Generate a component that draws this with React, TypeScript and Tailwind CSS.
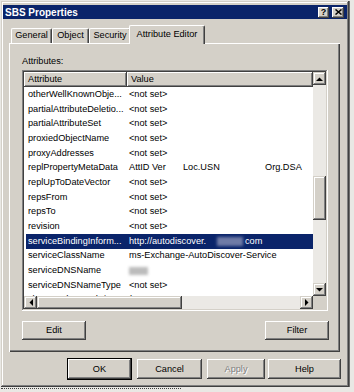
import type {ReactNode} from 'react';

type Dir = 'up' | 'down' | 'left' | 'right';

const Arrow = ({dir}: {dir: Dir}) => {
  if (dir === 'up' || dir === 'down') {
    const pts = dir === 'up' ? '0,4 7,4 3.5,0.5' : '0,0 7,0 3.5,3.5';
    return (
      <svg width="7" height="4" viewBox="0 0 7 4">
        <polygon points={pts} fill="#000" />
      </svg>
    );
  }
  const pts = dir === 'left' ? '4,0 4,7 0.5,3.5' : '0,0 0,7 3.5,3.5';
  return (
    <svg width="4" height="7" viewBox="0 0 4 7">
      <polygon points={pts} fill="#000" />
    </svg>
  );
};

const ScrollBtn = ({dir}: {dir: Dir}) => (
  <div className="flex h-[13px] w-[13px] shrink-0 items-center justify-center bg-[#d4d0c8] shadow-[inset_-1px_-1px_#404040,inset_1px_1px_#d4d0c8,inset_-2px_-2px_#808080,inset_2px_2px_#ffffff]">
    <Arrow dir={dir} />
  </div>
);

const Btn = ({children, className}: {children: ReactNode; className: string}) => (
  <div
    className={`flex items-center justify-center bg-[#d4d0c8] shadow-[inset_-1px_-1px_#404040,inset_1px_1px_#ffffff,inset_-2px_-2px_#808080,inset_2px_2px_#d4d0c8] ${className}`}
  >
    {children}
  </div>
);

const NotSet = '<not set>';

const rows: {name: string; value: ReactNode; selected?: boolean}[] = [
  {name: 'otherWellKnownObje...', value: NotSet},
  {name: 'partialAttributeDeletio...', value: NotSet},
  {name: 'partialAttributeSet', value: NotSet},
  {name: 'proxiedObjectName', value: NotSet},
  {name: 'proxyAddresses', value: NotSet},
  {
    name: 'replPropertyMetaData',
    value: (
      <span className="flex">
        <span className="w-[23px]">AttID</span>
        <span className="w-[31px]">Ver</span>
        <span className="w-[82px]">Loc.USN</span>
        <span>Org.DSA</span>
      </span>
    ),
  },
  {name: 'replUpToDateVector', value: NotSet},
  {name: 'repsFrom', value: NotSet},
  {name: 'repsTo', value: NotSet},
  {name: 'revision', value: NotSet},
  {
    name: 'serviceBindingInform...',
    selected: true,
    value: (
      <span className="flex items-center">
        <span className="w-[88px]">http://autodiscover.</span>
        <span className="h-[9px] w-[26px] bg-[#6f7ba6] blur-[1.5px]" />
        <span className="ml-[2px]">com</span>
      </span>
    ),
  },
  {name: 'serviceClassName', value: 'ms-Exchange-AutoDiscover-Service'},
  {
    name: 'serviceDNSName',
    value: <span className="mt-[1px] block h-[8px] w-[19px] bg-[#bcbcbc] blur-[1.5px]" />,
  },
  {name: 'serviceDNSNameType', value: NotSet},
  {name: 'showInAdvancedViewOnly', value: 'TRUE'},
];

const Tab = ({label, w, active}: {label: string; w: string; active?: boolean}) => (
  <div
    className={
      active
        ? `relative z-10 -mx-[2px] -mb-[1px] flex h-[19px] items-start justify-center rounded-t-[2px] border-t border-l border-r border-white border-r-[#404040] bg-[#d4d0c8] pt-[3px] shadow-[inset_-1px_0_#808080] ${w}`
        : `flex h-[15px] items-start justify-center rounded-t-[2px] border-t border-l border-r border-white border-r-[#404040] bg-[#d4d0c8] pt-[1px] shadow-[inset_-1px_0_#808080] ${w}`
    }
  >
    {label}
  </div>
);

const App = () => {
  return (
    <div className="h-[392px] w-[354px] overflow-hidden bg-[#e9e8e4] pt-[1px] pl-[1px] font-['Liberation_Sans',Arial,sans-serif] text-[9.2px] leading-[11px] text-black">
      <div className="h-[386px] w-[348px] bg-[#d4d0c8] p-[2px] shadow-[inset_-1px_-1px_#404040,inset_1px_1px_#d4d0c8,inset_-2px_-2px_#808080,inset_2px_2px_#ffffff,1px_0_#6e6e6e]">
        {/* title bar */}
        <div className="mt-[2px] flex h-[14px] items-center justify-between bg-[#0a246a] pr-[3px] pl-[2px]">
          <span className="text-[10px] font-bold text-white">SBS Properties</span>
          <div className="flex items-center gap-[3px]">
            <Btn className="h-[11px] w-[11px] text-[9px] font-bold leading-none">?</Btn>
            <Btn className="h-[11px] w-[12px]">
              <svg width="7" height="6" viewBox="0 0 7 6">
                <path d="M0.5 0.5 L6.5 5.5 M6.5 0.5 L0.5 5.5" stroke="#000" strokeWidth="1.5" />
              </svg>
            </Btn>
          </div>
        </div>

        {/* tabs */}
        <div className="mt-[7px] ml-[8px] flex h-[17px] items-end">
          <Tab label="General" w="w-[41px]" />
          <Tab label="Object" w="w-[37px]" />
          <Tab label="Security" w="w-[42px]" />
          <Tab label="Attribute Editor" w="w-[76px]" active />
        </div>

        {/* tab panel */}
        <div className="ml-[6px] flex h-[309px] w-[331px] flex-col pt-[13px] pl-[13px] shadow-[inset_1px_1px_#ffffff,inset_-1px_-1px_#404040,inset_-2px_-2px_#808080]">
          <div>Attributes:</div>
          <div className="mt-[3px] flex h-[241px] w-[306px] flex-col bg-white p-[2px] shadow-[inset_-1px_-1px_#ffffff,inset_1px_1px_#808080,inset_-2px_-2px_#d4d0c8,inset_2px_2px_#404040]">
            <div className="flex h-[224px]">
              <div className="w-[289px] overflow-hidden">
                <div className="flex h-[15px]">
                  <div className="flex w-[103px] items-center bg-[#d4d0c8] pl-[4px] shadow-[inset_-1px_-1px_#404040,inset_1px_1px_#ffffff,inset_-2px_-2px_#808080]">
                    Attribute
                  </div>
                  <div className="flex flex-1 items-center bg-[#d4d0c8] pl-[4px] shadow-[inset_-1px_-1px_#404040,inset_1px_1px_#ffffff,inset_-2px_-2px_#808080]">
                    Value
                  </div>
                </div>
                {rows.map((r) => (
                  <div
                    key={r.name}
                    className={
                      r.selected
                        ? 'ml-[2px] flex h-[14.7px] items-center bg-[#0a246a] text-white'
                        : 'ml-[2px] flex h-[14.7px] items-center'
                    }
                  >
                    <span className="w-[103px] shrink-0 pl-[2px] whitespace-nowrap">{r.name}</span>
                    <span className="whitespace-nowrap">{r.value}</span>
                  </div>
                ))}
              </div>
              <div className="flex w-[13px] flex-col bg-[#ebe9e5]">
                <ScrollBtn dir="up" />
                <div className="h-[91px]" />
                <div className="h-[44px] bg-[#d4d0c8] shadow-[inset_-1px_-1px_#404040,inset_1px_1px_#d4d0c8,inset_-2px_-2px_#808080,inset_2px_2px_#ffffff]" />
                <div className="flex-1" />
                <ScrollBtn dir="down" />
              </div>
            </div>
            <div className="flex h-[13px]">
              <div className="flex w-[289px] bg-[#ebe9e5]">
                <ScrollBtn dir="left" />
                <div className="w-[145px] bg-[#d4d0c8] shadow-[inset_-1px_-1px_#404040,inset_1px_1px_#d4d0c8,inset_-2px_-2px_#808080,inset_2px_2px_#ffffff]" />
                <div className="flex-1" />
                <ScrollBtn dir="right" />
              </div>
              <div className="w-[13px] bg-[#d4d0c8]" />
            </div>
          </div>
          <div className="mt-[10px] flex w-[307px] justify-between">
            <Btn className="h-[19px] w-[64px]">Edit</Btn>
            <Btn className="h-[19px] w-[64px]">Filter</Btn>
          </div>
        </div>

        {/* dialog buttons */}
        <div className="mt-[6px] ml-[64px] flex h-[22px] items-center">
          <div className="h-[22px] w-[65px] border border-black">
            <Btn className="h-full w-full">OK</Btn>
          </div>
          <Btn className="ml-[5px] h-[20px] w-[65px]">Cancel</Btn>
          <Btn className="ml-[5px] h-[20px] w-[58px] text-[#808080] [text-shadow:1px_1px_#ffffff]">Apply</Btn>
          <Btn className="ml-[3px] h-[20px] w-[73px]">Help</Btn>
        </div>
      </div>
      <div className="mt-[1px] w-[180px] border-t border-dotted border-[#404040]" />
    </div>
  );
};

export default App;
